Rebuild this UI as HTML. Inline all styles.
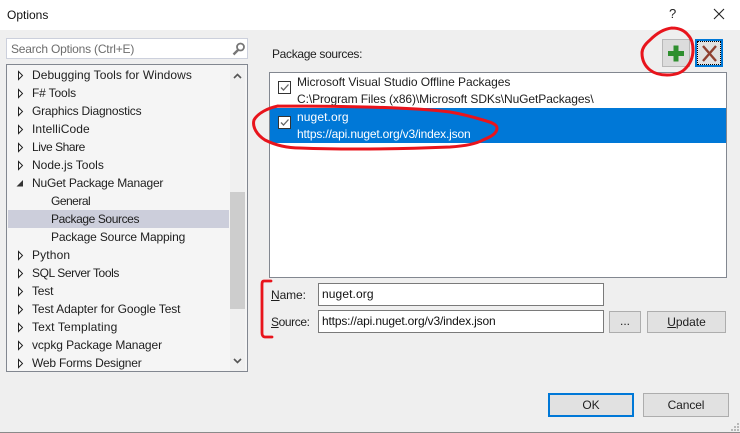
<!DOCTYPE html>
<html><head><meta charset="utf-8"><style>
html,body{margin:0;padding:0}
#p{position:relative;width:740px;height:433px;background:#efefef;overflow:hidden;font:12px/16px "Liberation Sans",sans-serif;color:#1e1e1e}
#p div{position:absolute;box-sizing:border-box}
.t{white-space:nowrap}
svg{position:absolute;left:0;top:0}
u{text-underline-offset:1px}
</style></head><body><div id="p">
<div style="left:0;top:0;width:740px;height:30px;background:#fff"></div>
<div class="t" style="left:7px;top:7px;color:#111">Options</div>
<div style="left:669px;top:6px;font-size:13px;color:#222">?</div>

<div style="left:6px;top:38px;width:242px;height:21px;background:#fff;border:1px solid #ccd0dc"></div>
<div class="t" style="left:11px;top:41px;color:#6d6d6d;letter-spacing:-.2px">Search Options (Ctrl+E)</div>

<div style="left:6px;top:64px;width:242px;height:308px;background:#f5f5f5;border:1px solid #828790"></div>
<div style="left:230px;top:65px;width:15px;height:306px;background:#f0f0f0"></div>
<div style="left:230px;top:192px;width:15px;height:117px;background:#cdcdcd"></div>
<div style="left:8px;top:210px;width:221px;height:18px;background:#cccedb"></div>

<div class="t" style="left:32px;top:67px;letter-spacing:.05px">Debugging Tools for Windows</div>
<div class="t" style="left:32px;top:85px;letter-spacing:-.15px">F# Tools</div>
<div class="t" style="left:32px;top:103px;letter-spacing:-.2px">Graphics Diagnostics</div>
<div class="t" style="left:32px;top:121px;letter-spacing:.1px">IntelliCode</div>
<div class="t" style="left:32px;top:139px;letter-spacing:-.45px">Live Share</div>
<div class="t" style="left:32px;top:157px">Node.js Tools</div>
<div class="t" style="left:32px;top:175px;letter-spacing:-.2px">NuGet Package Manager</div>
<div class="t" style="left:51px;top:193px;letter-spacing:-.5px">General</div>
<div class="t" style="left:51px;top:211px;letter-spacing:-.4px">Package Sources</div>
<div class="t" style="left:51px;top:229px;letter-spacing:-.15px">Package Source Mapping</div>
<div class="t" style="left:32px;top:247px;letter-spacing:.15px">Python</div>
<div class="t" style="left:32px;top:265px;letter-spacing:-.4px">SQL Server Tools</div>
<div class="t" style="left:32px;top:283px;letter-spacing:-.2px">Test</div>
<div class="t" style="left:32px;top:301px;letter-spacing:-.1px">Test Adapter for Google Test</div>
<div class="t" style="left:32px;top:319px;letter-spacing:.15px">Text Templating</div>
<div class="t" style="left:32px;top:337px;letter-spacing:-.1px">vcpkg Package Manager</div>
<div class="t" style="left:32px;top:355px;letter-spacing:-.2px">Web Forms Designer</div>

<div class="t" style="left:272px;top:46px;letter-spacing:-.33px">Package sources:</div>
<div style="left:269px;top:72px;width:458px;height:206px;background:#fff;border:1px solid #828790"></div>
<div style="left:270px;top:108px;width:456px;height:35px;background:#0078d7"></div>
<div class="t" style="left:297px;top:74px;letter-spacing:-.06px">Microsoft Visual Studio Offline Packages</div>
<div class="t" style="left:297px;top:91px;letter-spacing:-.08px">C:\Program Files (x86)\Microsoft SDKs\NuGetPackages\</div>
<div class="t" style="left:297px;top:109px;color:#fff;letter-spacing:.1px">nuget.org</div>
<div class="t" style="left:297px;top:126px;color:#fff;letter-spacing:-.17px">https://api.nuget.org/v3/index.json</div>

<div style="left:662px;top:39px;width:28px;height:28px;background:#dcdcdc;border:1px solid #b8b8b8"></div>
<div style="left:695px;top:39px;width:28px;height:28px;background:#e1e1e1;border:2px solid #0078d7;outline:1px dotted #000;outline-offset:-3px"></div>

<div class="t" style="left:271px;top:287px;letter-spacing:-.1px"><u>N</u>ame:</div>
<div class="t" style="left:271px;top:314px;letter-spacing:-.4px"><u>S</u>ource:</div>
<div style="left:318px;top:283px;width:286px;height:23px;background:#fff;border:1px solid #7a7a7a"></div>
<div style="left:318px;top:310px;width:286px;height:23px;background:#fff;border:1px solid #7a7a7a"></div>
<div class="t" style="left:322px;top:286px;color:#111;letter-spacing:.1px">nuget.org</div>
<div class="t" style="left:322px;top:313px;color:#111;letter-spacing:-.17px">https://api.nuget.org/v3/index.json</div>
<div style="left:609px;top:311px;width:32px;height:22px;background:#e1e1e1;border:1px solid #adadad"></div>
<div class="t" style="left:609px;top:313px;width:32px;text-align:center">...</div>
<div style="left:647px;top:311px;width:79px;height:22px;background:#e1e1e1;border:1px solid #adadad"></div>
<div class="t" style="left:647px;top:314px;width:79px;text-align:center;letter-spacing:-.05px"><u>U</u>pdate</div>
<div style="left:548px;top:393px;width:86px;height:24px;background:#e1e1e1;border:2px solid #0078d7"></div>
<div class="t" style="left:548px;top:397px;width:86px;text-align:center">OK</div>
<div style="left:643px;top:393px;width:86px;height:24px;background:#e1e1e1;border:1px solid #adadad"></div>
<div class="t" style="left:643px;top:397px;width:86px;text-align:center;letter-spacing:-.1px">Cancel</div>
<div style="left:0;top:432px;width:740px;height:1px;background:#8a8a8a"></div>

<svg width="740" height="433" viewBox="0 0 740 433" fill="none">
<path d="M714 9l10 10M724 9l-10 10" stroke="#222" stroke-width="1.100"/>
<circle cx="240.500" cy="47" r="3.500" stroke="#777" stroke-width="1.800"/>
<path d="M238 50l-4.500 4.500" stroke="#777" stroke-width="2.400"/>
<path d="M234 78l3.500-3.500 3.500 3.500" stroke="#555" stroke-width="1.600"/>
<path d="M234 359l3.500 3.500 3.500-3.500" stroke="#555" stroke-width="1.600"/>
<g fill="#fff" stroke="#222" stroke-width="1">
<path d="M18.500 71.500v8l4-4z"/><path d="M18.500 89.500v8l4-4z"/><path d="M18.500 107.500v8l4-4z"/><path d="M18.500 125.500v8l4-4z"/><path d="M18.500 143.500v8l4-4z"/><path d="M18.500 161.500v8l4-4z"/><path d="M18.500 251.500v8l4-4z"/><path d="M18.500 269.500v8l4-4z"/><path d="M18.500 287.500v8l4-4z"/><path d="M18.500 305.500v8l4-4z"/><path d="M18.500 323.500v8l4-4z"/><path d="M18.500 341.500v8l4-4z"/><path d="M18.500 359.500v8l4-4z"/>
</g>
<path d="M23 180v6.500h-6.500z" fill="#333"/>
<rect x="278.500" y="81.500" width="12" height="12" fill="#fff" stroke="#333"/>
<path d="M281 87.500l2.500 2.500 5-5.500" stroke="#666" stroke-width="1.300"/>
<rect x="278.500" y="116.500" width="12" height="12" fill="#fff" stroke="#333"/>
<path d="M281 122.500l2.500 2.500 5-5.500" stroke="#666" stroke-width="1.300"/>
<path d="M676 45.500v16M668 53.500h16" stroke="#2f8f2f" stroke-width="5"/>
<path d="M703 46l13 15M716 46l-13 15" stroke="#8f4030" stroke-width="2.400"/>
<g fill="#b8b8b8"><rect x="737" y="423" width="2" height="2"/><rect x="734" y="426" width="2" height="2"/><rect x="737" y="426" width="2" height="2"/><rect x="731" y="429" width="2" height="2"/><rect x="734" y="429" width="2" height="2"/><rect x="737" y="429" width="2" height="2"/></g>
<g stroke="#e8141c" stroke-width="3" stroke-linecap="round" stroke-linejoin="round">
<path d="M672 28C662 29 655 35 650 40C644 45 642 49 642 53C642 60 645 66 650 70C655 74 661 75 667 75C675 75 681 73 685 69C690 64 693 57 693 50C693 43 691 38 688 35C684 30 678 28 672 28"/>
<path d="M278 106C268 108 258 113 254 120C252 127 257 135 265 140C275 145 287 148 300 148C350 150 400 149 450 147C465 146 476 144 483 140C490 137 497 134 497 128C497 124 490 122 483 120C473 117 462 114 450 112C410 107 340 106 278 106"/>
<path d="M271 281h-7c-2 0-2 2-2 4v48c0 2 1 4 3 4h7" stroke-width="2.800"/>
</g>
</svg>
</div></body></html>
